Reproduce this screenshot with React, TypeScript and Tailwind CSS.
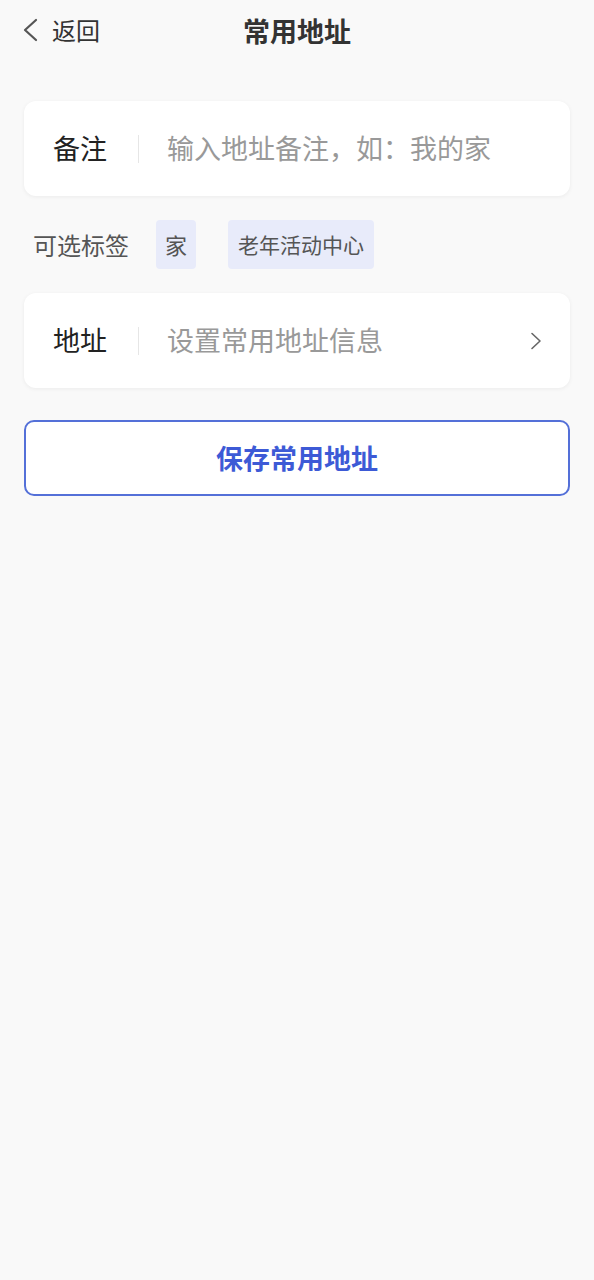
export default function App() {
  return (
    <div
      className="min-h-[1280px] w-full bg-[#f9f9f9] text-[#333]"
      style={{ fontFamily: '"Noto Sans CJK SC", "Noto Sans", sans-serif' }}
    >
      {/* 顶部栏 */}
      <div className="relative flex h-[60px] items-center px-[22px]">
        <div className="flex items-center gap-[13px]">
          <svg width="17" height="24" viewBox="0 0 17 24" fill="none">
            <path d="M14 2 L3 12 L14 22" stroke="#555" strokeWidth="2.2" strokeLinecap="round" strokeLinejoin="round" />
          </svg>
          <span className="text-[24px] leading-none text-[#333]">返回</span>
        </div>
        <h1 className="absolute left-1/2 -translate-x-1/2 text-[27px] font-bold leading-none text-[#333]">
          常用地址
        </h1>
      </div>

      <div className="px-[24px] pt-[41px]">
        {/* 备注 */}
        <div className="flex h-[95px] items-center rounded-[12px] bg-white shadow-[0_1px_4px_rgba(0,0,0,0.06)]">
          <span className="w-[114px] pl-[29px] text-[27px] text-[#222]">备注</span>
          <div className="h-[28px] w-px bg-[#e6e6e6]" />
          <span className="pl-[28px] text-[27px] text-[#999]">输入地址备注，如：我的家</span>
        </div>

        {/* 可选标签 */}
        <div className="flex h-[97px] items-center pl-[9px]">
          <span className="mr-[27px] text-[24px] text-[#555]">可选标签</span>
          <div className="flex gap-[32px]">
            <span className="flex h-[49px] items-center rounded-[4px] bg-[#e8ebfa] px-[9px] text-[22px] text-[#555]">家</span>
            <span className="flex h-[49px] items-center rounded-[4px] bg-[#e8ebfa] px-[10px] text-[21px] text-[#555]">老年活动中心</span>
          </div>
        </div>

        {/* 地址 */}
        <div className="flex h-[95px] items-center rounded-[12px] bg-white shadow-[0_1px_4px_rgba(0,0,0,0.06)]">
          <span className="w-[114px] pl-[29px] text-[27px] text-[#222]">地址</span>
          <div className="h-[28px] w-px bg-[#e6e6e6]" />
          <span className="flex-1 pl-[28px] text-[27px] text-[#999]">设置常用地址信息</span>
          <svg className="mr-[28px]" width="12" height="18" viewBox="0 0 12 18" fill="none">
            <path d="M2 1.5 L10 9 L2 16.5" stroke="#666" strokeWidth="1.6" strokeLinecap="round" strokeLinejoin="round" />
          </svg>
        </div>

        {/* 保存按钮 */}
        <button className="mt-[32px] flex h-[76px] w-full items-center justify-center rounded-[10px] border-2 border-[#5470d8] bg-white text-[27px] font-bold text-[#3d5ad6]">
          保存常用地址
        </button>
      </div>
    </div>
  );
}
